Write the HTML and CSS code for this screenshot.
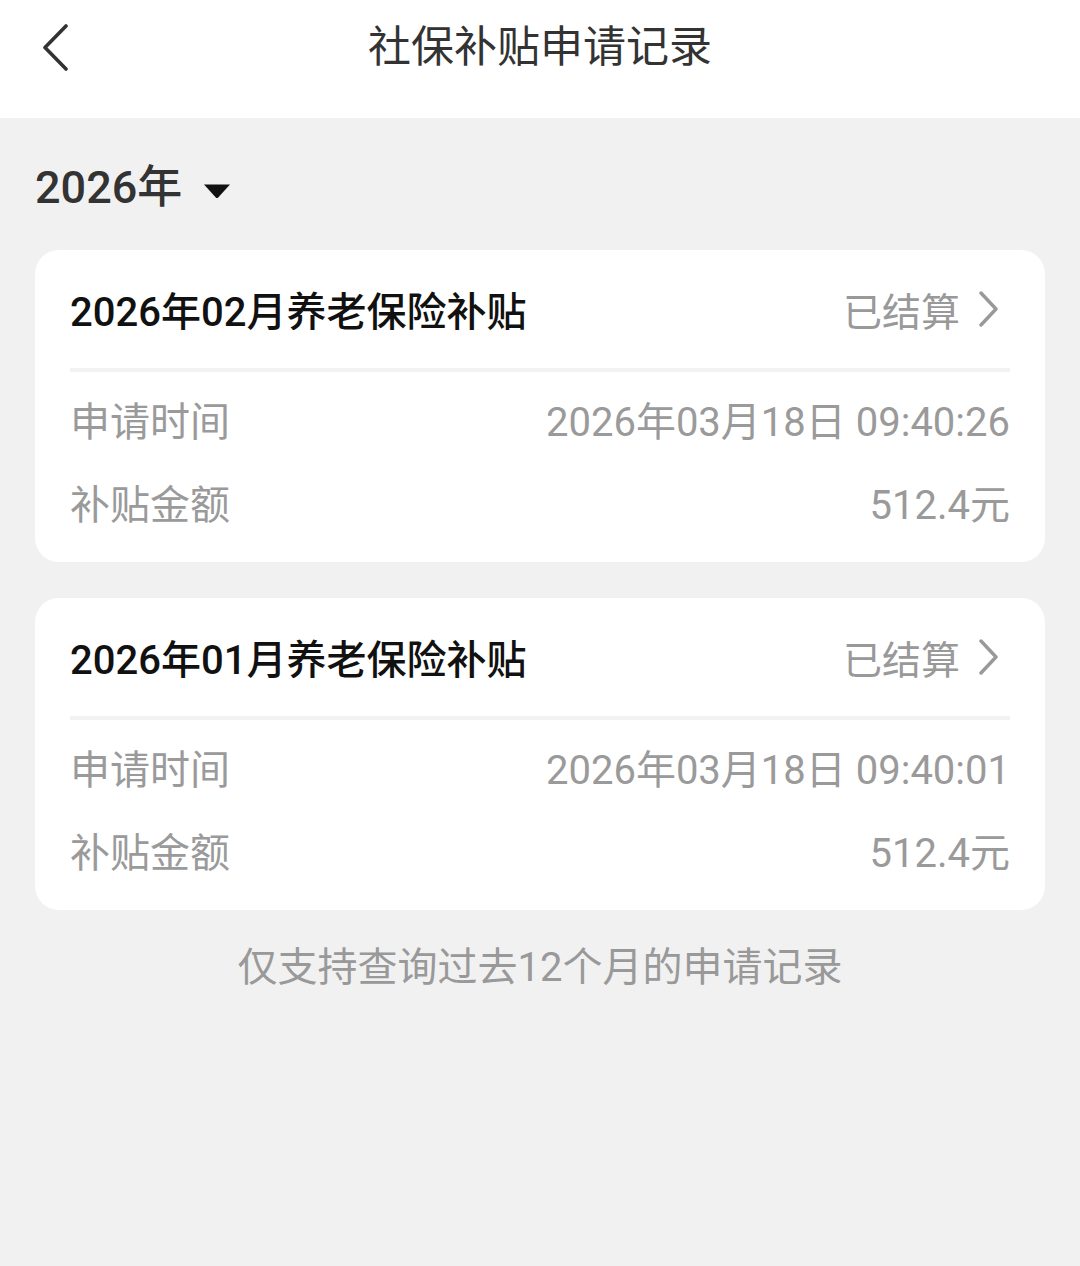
FILE: index.html
```html
<!DOCTYPE html>
<html lang="zh-CN">
<head>
    <meta charset="UTF-8">
    <title>社保补贴申请记录</title>
    <link rel="stylesheet" href="styles.css">
</head>
<body>
<div class="header">
    <span class="back">
        <svg width="30" height="48" viewBox="0 0 30 48"><path d="M25 3 L4 24.5 L25 46" fill="none" stroke="#333" stroke-width="3.6" stroke-linecap="round" stroke-linejoin="round"/></svg>
    </span>
    <h1 class="title">社保补贴申请记录</h1>
</div>

<div class="main">
    <div class="year">
        <span>2026年</span>
        <svg class="caret" width="28" height="16" viewBox="0 0 28 16"><path d="M1 1.5 H27 L15.2 14.5 Q14 15.6 12.8 14.5 Z" fill="#111"/></svg>
    </div>

    <div class="card">
        <div class="card-head">
            <span class="card-name">2026年02月养老保险补贴</span>
            <span class="status">已结算
                <svg width="22" height="36" viewBox="0 0 22 36"><path d="M3 2 L18 18 L3 34" fill="none" stroke="#999" stroke-width="3.4" stroke-linecap="round" stroke-linejoin="round"/></svg>
            </span>
        </div>
        <div class="card-body">
            <div class="row"><span>申请时间</span><span>2026年03月18日 09:40:26</span></div>
            <div class="row"><span>补贴金额</span><span>512.4元</span></div>
        </div>
    </div>

    <div class="card">
        <div class="card-head">
            <span class="card-name">2026年01月养老保险补贴</span>
            <span class="status">已结算
                <svg width="22" height="36" viewBox="0 0 22 36"><path d="M3 2 L18 18 L3 34" fill="none" stroke="#999" stroke-width="3.4" stroke-linecap="round" stroke-linejoin="round"/></svg>
            </span>
        </div>
        <div class="card-body">
            <div class="row"><span>申请时间</span><span>2026年03月18日 09:40:01</span></div>
            <div class="row"><span>补贴金额</span><span>512.4元</span></div>
        </div>
    </div>

    <p class="tip">仅支持查询过去12个月的申请记录</p>
</div>
</body>
</html>
```

FILE: styles.css
```css
*{
    margin: 0;
    padding: 0;
    box-sizing: border-box;
}
html,body{
    height: 100%;
}
body{
    background: #f1f1f1;
    font-family: Roboto, "Noto Sans CJK SC", sans-serif;
    color: #333;
}
.header{
    height: 118px;
    background: #fff;
    display: flex;
    align-items: center;
    justify-content: center;
    position: relative;
}
.header .back{
    position: absolute;
    left: 41px;
    top: 23px;
    display: flex;
}
.header .title{
    font-size: 43px;
    font-weight: 400;
    color: #333;
    line-height: 60px;
    margin-top: -24px;
}
.main{
    padding: 0 35px;
}
.year{
    display: flex;
    align-items: center;
    gap: 21px;
    padding-top: 40px;
    height: 100px;
    line-height: 60px;
    font-size: 45px;
    font-weight: 500;
    color: #333;
    margin-bottom: 32px;
}
.year .caret{
    margin-top: 6px;
}
.card{
    background: #fff;
    border-radius: 24px;
    padding: 0 35px 19px;
    margin-bottom: 36px;
}
.card-head{
    height: 122px;
    display: flex;
    align-items: center;
    justify-content: space-between;
    border-bottom: 4px solid #f2f2f2;
}
.card-name{
    font-size: 40px;
    font-weight: 500;
    color: #111;
}
.status{
    display: flex;
    align-items: center;
    gap: 18px;
    font-size: 39px;
    color: #999;
    margin-right: 10px;
}
.card-body{
    padding-top: 5px;
}
.row{
    height: 83px;
    display: flex;
    align-items: center;
    justify-content: space-between;
    font-size: 40px;
    color: #9a9a9a;
}
.tip{
    text-align: center;
    font-size: 40px;
    color: #999;
    margin-top: -28px;
    line-height: 100px;
}
```
